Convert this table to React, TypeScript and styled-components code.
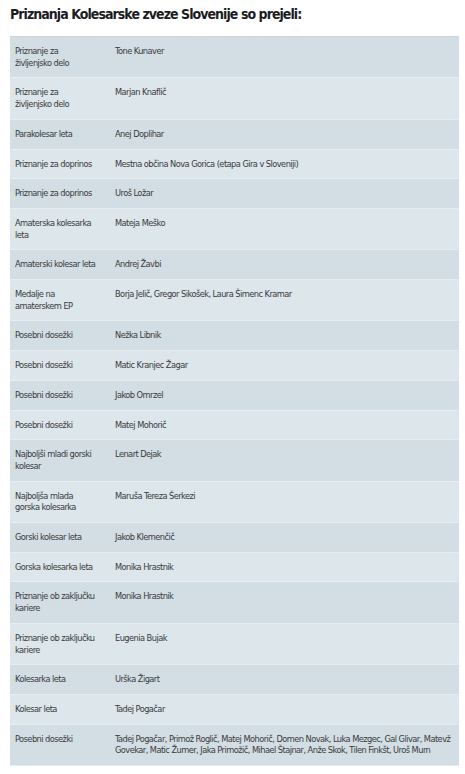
import React from "react";
import styled, { createGlobalStyle } from "styled-components";

const GlobalStyle = createGlobalStyle`
  html, body { margin: 0; padding: 0; background: #ffffff; }
  body { font-family: "DejaVu Sans Condensed", "Liberation Sans", sans-serif; }
`;

const Page = styled.div`
  width: 465px;
  padding: 0 6px 0 10px;
  box-sizing: border-box;
`;

const Title = styled.h2`
  margin: 0;
  padding-top: 4px;
  height: 36px;
  box-sizing: border-box;
  font-family: "DejaVu Sans Condensed", "Liberation Sans", sans-serif;
  font-weight: 700;
  font-size: 14px;
  letter-spacing: -0.95px;
  line-height: 20px;
  color: #1b1c22;
`;

const Table = styled.table`
  width: 449px;
  border-collapse: collapse;
  border-top: 1px solid #cfd6d9;
  font-size: 9.2px;
  letter-spacing: -0.55px;
  color: #3a3a3a;
`;

const Row = styled.tr<{ $alt: boolean }>`
  background: ${(p) => (p.$alt ? "#dce6eb" : "#d2dee4")};
  border-bottom: 1px solid #e6ecef;
`;

const LabelCell = styled.td`
  vertical-align: top;
  width: 90px;
  padding: 8px 5px 9px 5px;
  line-height: 11.7px;
  white-space: pre-line;
`;

const ValueCell = styled.td`
  vertical-align: top;
  padding: 8px 1px 9px 5px;
  line-height: 11.7px;
`;

const rows: [string, string][] = [
  ["Priznanje za\nživljenjsko delo", "Tone Kunaver"],
  ["Priznanje za\nživljenjsko delo", "Marjan Knaflič"],
  ["Parakolesar leta", "Anej Doplihar"],
  ["Priznanje za doprinos", "Mestna občina Nova Gorica (etapa Gira v Sloveniji)"],
  ["Priznanje za doprinos", "Uroš Ložar"],
  ["Amaterska kolesarka\nleta", "Mateja Meško"],
  ["Amaterski kolesar leta", "Andrej Žavbi"],
  ["Medalje na\namaterskem EP", "Borja Jelič, Gregor Sikošek, Laura Šimenc Kramar"],
  ["Posebni dosežki", "Nežka Libnik"],
  ["Posebni dosežki", "Matic Kranjec Žagar"],
  ["Posebni dosežki", "Jakob Omrzel"],
  ["Posebni dosežki", "Matej Mohorič"],
  ["Najboljši mladi gorski\nkolesar", "Lenart Dejak"],
  ["Najboljša mlada\ngorska kolesarka", "Maruša Tereza Šerkezi"],
  ["Gorski kolesar leta", "Jakob Klemenčič"],
  ["Gorska kolesarka leta", "Monika Hrastnik"],
  ["Priznanje ob zaključku\nkariere", "Monika Hrastnik"],
  ["Priznanje ob zaključku\nkariere", "Eugenia Bujak"],
  ["Kolesarka leta", "Urška Žigart"],
  ["Kolesar leta", "Tadej Pogačar"],
  [
    "Posebni dosežki",
    "Tadej Pogačar, Primož Roglič, Matej Mohorič, Domen Novak, Luka Mezgec, Gal Glivar, Matevž Govekar, Matic Žumer, Jaka Primožič, Mihael Štajnar, Anže Skok, Tilen Finkšt, Uroš Murn",
  ],
];

export default function App() {
  return (
    <Page>
      <GlobalStyle />
      <Title>Priznanja Kolesarske zveze Slovenije so prejeli:</Title>
      <Table>
        <tbody>
          {rows.map(([a, b], i) => (
            <Row key={i} $alt={i % 2 === 1}>
              <LabelCell>{a}</LabelCell>
              <ValueCell>{b}</ValueCell>
            </Row>
          ))}
        </tbody>
      </Table>
    </Page>
  );
}
